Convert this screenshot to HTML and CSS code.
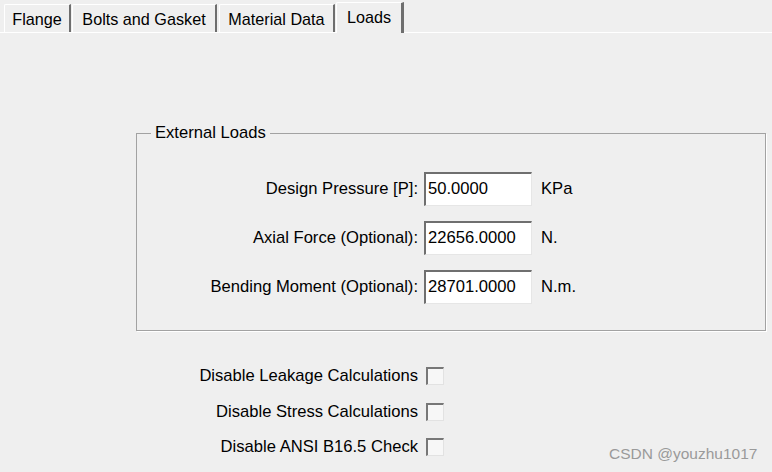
FILE: index.html
```
<!DOCTYPE html>
<html>
<head>
<meta charset="utf-8">
<link rel="stylesheet" href="styles.css">
</head>
<body>
<div class="window">
  <div class="tabs">
    <div class="tab tab-flange">Flange</div>
    <div class="tab tab-bolts">Bolts and Gasket</div>
    <div class="tab tab-material">Material Data</div>
    <div class="tab tab-loads active">Loads</div>
  </div>
  <div class="panel">
    <fieldset class="group">
      <legend class="group-title">External Loads</legend>
      <div class="fields">
        <label class="field-label">Design Pressure [P]:</label>
        <div class="input">50.0000</div>
        <span class="unit">KPa</span>
        <label class="field-label">Axial Force (Optional):</label>
        <div class="input">22656.0000</div>
        <span class="unit">N.</span>
        <label class="field-label">Bending Moment (Optional):</label>
        <div class="input">28701.0000</div>
        <span class="unit">N.m.</span>
      </div>
    </fieldset>
    <div class="checks">
      <label class="check-label">Disable Leakage Calculations</label>
      <div class="checkbox"></div>
      <label class="check-label">Disable Stress Calculations</label>
      <div class="checkbox"></div>
      <label class="check-label">Disable ANSI B16.5 Check</label>
      <div class="checkbox"></div>
    </div>
  </div>
  <div class="watermark">CSDN @youzhu1017</div>
</div>
</body>
</html>
```
FILE: styles.css
```
html, body {
  margin: 0;
  padding: 0;
}
body {
  width: 772px;
  height: 472px;
  overflow: hidden;
  background: #efefef;
  font-family: "Liberation Sans", Arial, sans-serif;
  font-size: 16.6px;
  color: #000;
}
.window {
  position: relative;
  width: 772px;
  height: 472px;
}
.tabs {
  display: flex;
  align-items: flex-end;
  height: 32px;
  padding-left: 4px;
  box-sizing: border-box;
}
.tab {
  box-sizing: border-box;
  height: 28px;
  line-height: 28px;
  font-size: 16.2px;
  text-align: center;
  border-top: 1px solid #ffffff;
  border-left: 1px solid #ffffff;
  border-right: 2px solid #6e6e6e;
  border-top-left-radius: 2px;
  white-space: nowrap;
}
.tab-flange { width: 67px; }
.tab-bolts { width: 145px; margin-left: 1px; }
.tab-material { width: 116px; margin-left: 2px; }
.tab-loads {
  width: 68px;
  margin-left: 1px;
  height: 31px;
  line-height: 28px;
  margin-bottom: -1px;
  background: #efefef;
  position: relative;
  z-index: 1;
  border-right-width: 3px;
}
.panel {
  border-top: 1px solid #ffffff;
  height: 439px;
  box-sizing: border-box;
}
.group {
  margin: 91px 6px 0 136px;
  padding: 30px 0 26px 0;
  border: 1px solid #a2a2a2;
  box-shadow: 1px 1px 0 #ffffff;
  min-width: 0;
}
.group-title {
  margin-left: 14px;
  padding: 0 4px;
  line-height: 18px;
}
.fields {
  display: grid;
  grid-template-columns: 281px 108px auto;
  column-gap: 6px;
  row-gap: 15px;
  align-items: center;
}
.field-label {
  text-align: right;
  white-space: nowrap;
}
.input {
  box-sizing: border-box;
  height: 34px;
  line-height: 30px;
  padding-left: 2px;
  background: #ffffff;
  border-top: 2px solid #6f6f6f;
  border-left: 2px solid #6f6f6f;
  border-right: 1px solid #e6e6e6;
  border-bottom: 1px solid #e6e6e6;
}
.unit {
  padding-left: 3px;
}
.checks {
  display: grid;
  grid-template-columns: 418px 18px;
  column-gap: 8px;
  row-gap: 17.5px;
  align-items: center;
  margin-top: 36px;
}
.check-label {
  text-align: right;
  white-space: nowrap;
  line-height: 18px;
}
.checkbox {
  box-sizing: border-box;
  width: 18px;
  height: 18px;
  background: #f7f7f7;
  border-top: 2px solid #777777;
  border-left: 2px solid #777777;
  border-right: 1px solid #e2e2e2;
  border-bottom: 1px solid #e2e2e2;
}
.watermark {
  position: absolute;
  left: 609px;
  top: 445px;
  font-size: 15.5px;
  color: #9a9a9a;
  white-space: nowrap;
}
```
